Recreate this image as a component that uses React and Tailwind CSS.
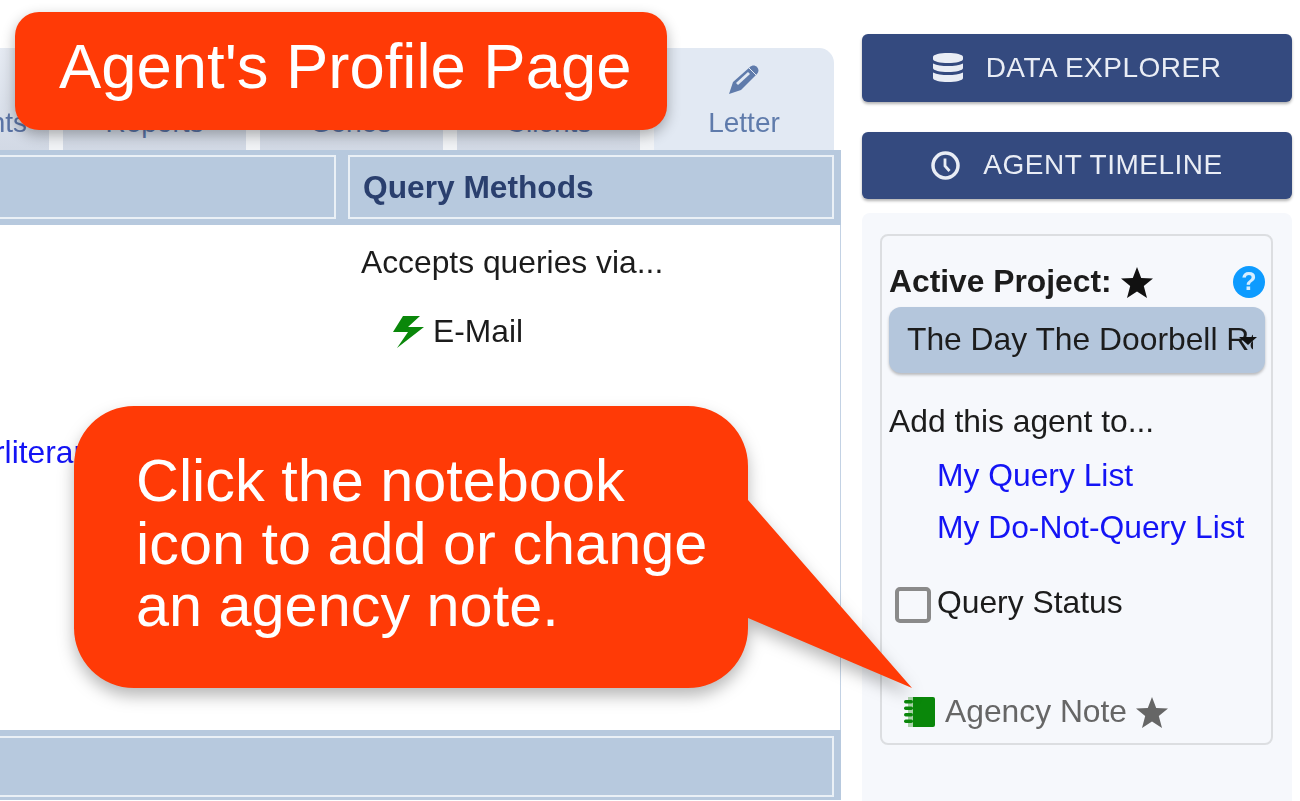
import React from 'react';

const SANS = "[font-family:'Liberation_Sans',Arial,sans-serif]";

const Tab = ({ label, className = '' }) => (
  <div className={`w-[183px] h-full shrink-0 flex flex-col items-center justify-end pb-[9px] bg-linear-to-b from-[#e6ebf3] to-[#d2d9e5] text-[28px] leading-9 text-[#5b74a6] ${className}`}>
    {label}
  </div>
);

const TabGap = () => <div className="w-[14px] h-full shrink-0 self-end bg-[#f1f3f6]" />;

const NavButton = ({ icon, label, gap }) => (
  <button className={`w-full h-[67.5px] flex items-center justify-center ${gap} rounded-md bg-[#344a7f] text-[#e9edf5] text-[28px] tracking-[0.5px] shadow-[0_2px_3px_rgba(0,0,0,0.3)]`}>
    {icon}
    <span>{label}</span>
  </button>
);

const DatabaseIcon = () => (
  <svg width="30" height="29" viewBox="0 0 30 29" fill="#e9edf5" className="shrink-0">
    <path d="M0 4C0 1.5 7 0 15 0S30 1.5 30 4V6C30 8.5 23 10 15 10S0 8.5 0 6Z" />
    <path d="M0 10.5C4 12.5 9 13 15 13S26 12.5 30 10.5V15C30 17.5 23 19 15 19S0 17.5 0 15Z" />
    <path d="M0 19.5C4 21.5 9 22 15 22S26 21.5 30 19.5V25C30 27.5 23 29 15 29S0 27.5 0 25Z" />
  </svg>
);

const ClockIcon = () => (
  <svg width="29" height="29" viewBox="0 0 29 29" fill="none" stroke="#e9edf5" className="shrink-0">
    <circle cx="14.5" cy="14.5" r="12.5" strokeWidth="3.5" />
    <path d="M14 7.5V15L18.5 20" strokeWidth="2.8" />
  </svg>
);

const PencilIcon = () => (
  <svg width="30" height="29" viewBox="0 0 30 29" className="shrink-0">
    <path d="M0 29L4 17L21 2C23 0 26 0 28 2C30 4 30 7 28 9L12 25Z" fill="#5f7bab" />
    <path d="M8 19L20 8" stroke="#e2e9f3" strokeWidth="3" />
    <path d="M20 3L27 10" stroke="#e2e9f3" strokeWidth="1" />
  </svg>
);

const BoltIcon = () => (
  <svg width="31" height="33" viewBox="0 0 31 33" fill="#0a870a" className="shrink-0">
    <polygon points="27,1 10,1 0,17 15,17 4,33 31,12 15,12" />
  </svg>
);

const StarIcon = ({ className }) => (
  <svg width="32" height="31" viewBox="0 0 32 31" className={`shrink-0 ${className}`}>
    <polygon fill="currentColor" points="16,0 20.2,11 32,11.5 22.8,19 26,31 16,24.5 6,31 9.2,19 0,11.5 11.8,11" />
  </svg>
);

const NotebookIcon = () => (
  <svg width="32" height="30" viewBox="0 0 32 30" className="shrink-0">
    <rect x="4" y="0" width="27" height="30" rx="2" fill="#0a870a" />
    <rect x="4" y="0" width="5" height="30" fill="#a9d2a9" />
    <rect x="0" y="3" width="9" height="3.5" rx="1.7" fill="#0a870a" />
    <rect x="0" y="9.5" width="9" height="3.5" rx="1.7" fill="#0a870a" />
    <rect x="0" y="16" width="9" height="3.5" rx="1.7" fill="#0a870a" />
    <rect x="0" y="22.5" width="9" height="3.5" rx="1.7" fill="#0a870a" />
  </svg>
);

const App = () => {
  return (
    <div className={`relative w-[1300px] h-[801px] overflow-hidden bg-white ${SANS}`}>
      <div className="flex h-full blur-[0.5px]">

        {/* Left column: tabs + table */}
        <div className="w-[841px] shrink-0 pt-[48px]">
          <div className="flex w-[834px] h-[102px]">
            <div className="w-[49px] h-full shrink-0 overflow-hidden flex justify-end items-end pb-[9px] pr-[22px] bg-linear-to-b from-[#e6ebf3] to-[#d2d9e5] text-[28px] leading-9 text-[#5b74a6]">
              <span className="whitespace-nowrap">Comments</span>
            </div>
            <TabGap />
            <Tab label="Reports" />
            <TabGap />
            <Tab label="Series" />
            <TabGap />
            <Tab label="Clients" />
            <TabGap />
            <div className="flex-1 h-full flex flex-col items-center justify-end pb-[9px] rounded-tr-[15px] bg-[#e2e9f3] text-[28px] leading-9 text-[#5f7bab]">
              <div className="mb-[11px]"><PencilIcon /></div>
              Letter
            </div>
          </div>

          <div className="flex flex-col h-[650px] bg-[#b7c9de]">
            {/* Header cells */}
            <div className="h-[75px] pt-[5px] pr-[7px] flex gap-[12px] shrink-0">
              <div className="w-[336px] h-[64px] border-2 border-l-0 border-[#eaf0f6]" />
              <div className="flex-1 h-[64px] border-2 border-[#eaf0f6] flex items-center pl-[13px] pt-[2px] font-bold text-[31.7px] text-[#2a3f6e]">
                Query Methods
              </div>
            </div>

            {/* Body */}
            <div className="flex-1 flex bg-white border-r border-[#c3d2e4] text-[31.8px] text-[#1c1c1c]">
              <div className="w-[336px] shrink-0 overflow-hidden pt-[207px]">
                <a className="block -ml-[6px] whitespace-nowrap leading-10 text-[#1414f5]">rliterary.com</a>
              </div>
              <div className="flex-1 pl-[25px] pt-[17px]">
                <p className="leading-10">Accepts queries via...</p>
                <div className="flex items-center gap-[9px] mt-[29px] pl-[32px]">
                  <BoltIcon />
                  <span className="leading-10">E-Mail</span>
                </div>
              </div>
            </div>

            {/* Footer cell */}
            <div className="h-[70px] pt-[6px] pr-[7px] shrink-0">
              <div className="h-[61px] border-2 border-l-0 border-[#eaf0f6]" />
            </div>
          </div>
        </div>

        {/* Right column */}
        <div className="w-[430px] ml-[21px] shrink-0 pt-[34px] flex flex-col">
          <NavButton icon={<DatabaseIcon />} label="DATA EXPLORER" gap="gap-[23px]" />
          <div className="mt-[30px]">
            <NavButton icon={<ClockIcon />} label="AGENT TIMELINE" gap="gap-[23px]" />
          </div>

          <div className="mt-[14px] flex-1 bg-[#f6f8fc] rounded-t-lg pt-[21px] px-[18px]">
            <div className="w-[393px] h-[511px] border-2 border-[#dcdee1] rounded-lg pl-[7px] pr-[6px] pt-[26px] text-[31.8px] text-[#1c1c1c]">
              <div className="flex items-center justify-between h-10">
                <div className="flex items-center gap-[9px] font-bold">
                  <span>Active Project:</span>
                  <StarIcon className="text-[#111]" />
                </div>
                <div className="w-[32px] h-[32px] rounded-full bg-[#0d9bff] flex items-center justify-center text-[25px] font-bold text-[#d7eeff]">?</div>
              </div>

              <div className="relative mt-[5px] h-[66px] rounded-xl bg-[#b4c6dc] shadow-[0_2px_3px_rgba(0,0,0,0.25)] flex items-center pl-[18px] overflow-hidden">
                <span className="block w-[346px] overflow-hidden whitespace-nowrap">The Day The Doorbell Rang</span>
                <span className="absolute right-[8px] top-[30px] w-0 h-0 border-x-[9px] border-x-transparent border-t-[8px] border-t-[#111]" />
              </div>

              <p className="mt-[28px] leading-10">Add this agent to...</p>
              <a className="block mt-[14px] ml-[48px] leading-10 text-[#1414f5]">My Query List</a>
              <a className="block mt-[12px] ml-[48px] leading-10 text-[#1414f5]">My Do-Not-Query List</a>

              <div className="flex items-start gap-[6px] mt-[38px] ml-[6px] h-10">
                <span className="w-[36px] h-[36px] mt-[2px] border-[4px] border-[#8a8a8a] rounded-[5px] shrink-0" />
                <span className="leading-10 -mt-[3px]">Query Status</span>
              </div>

              <div className="flex items-center mt-[67px] ml-[15px] h-10 text-[#666]">
                <NotebookIcon />
                <span className="ml-[9px]">Agency Note</span>
                <StarIcon className="ml-[9px] text-[#666]" />
              </div>
            </div>
          </div>
        </div>
      </div>

      {/* Callouts */}
      <div className="absolute left-[15px] top-[12px] w-[652px] h-[118px] rounded-[24px] bg-[#ff3a06] shadow-[0_5px_14px_rgba(0,0,0,0.3)] flex items-center pl-[44px] pb-[8px] text-[63.4px] text-white whitespace-nowrap">
        Agent's Profile Page
      </div>

      <svg className="absolute left-0 top-0 [filter:drop-shadow(0_8px_8px_rgba(0,0,0,0.28))]" width="1300" height="801" viewBox="0 0 1300 801">
        <path
          d="M134 406 H688 A60 60 0 0 1 748 466 V500 L912 688 L748 618 V628 A60 60 0 0 1 688 688 H134 A60 60 0 0 1 74 628 V466 A60 60 0 0 1 134 406 Z"
          fill="#ff3a06"
        />
      </svg>
      <div className="absolute left-[136px] top-[450px] text-[59.4px] leading-[62.5px] text-white whitespace-nowrap">
        Click the notebook<br />
        icon to add or change<br />
        an agency note.
      </div>
    </div>
  );
};

export default App;
